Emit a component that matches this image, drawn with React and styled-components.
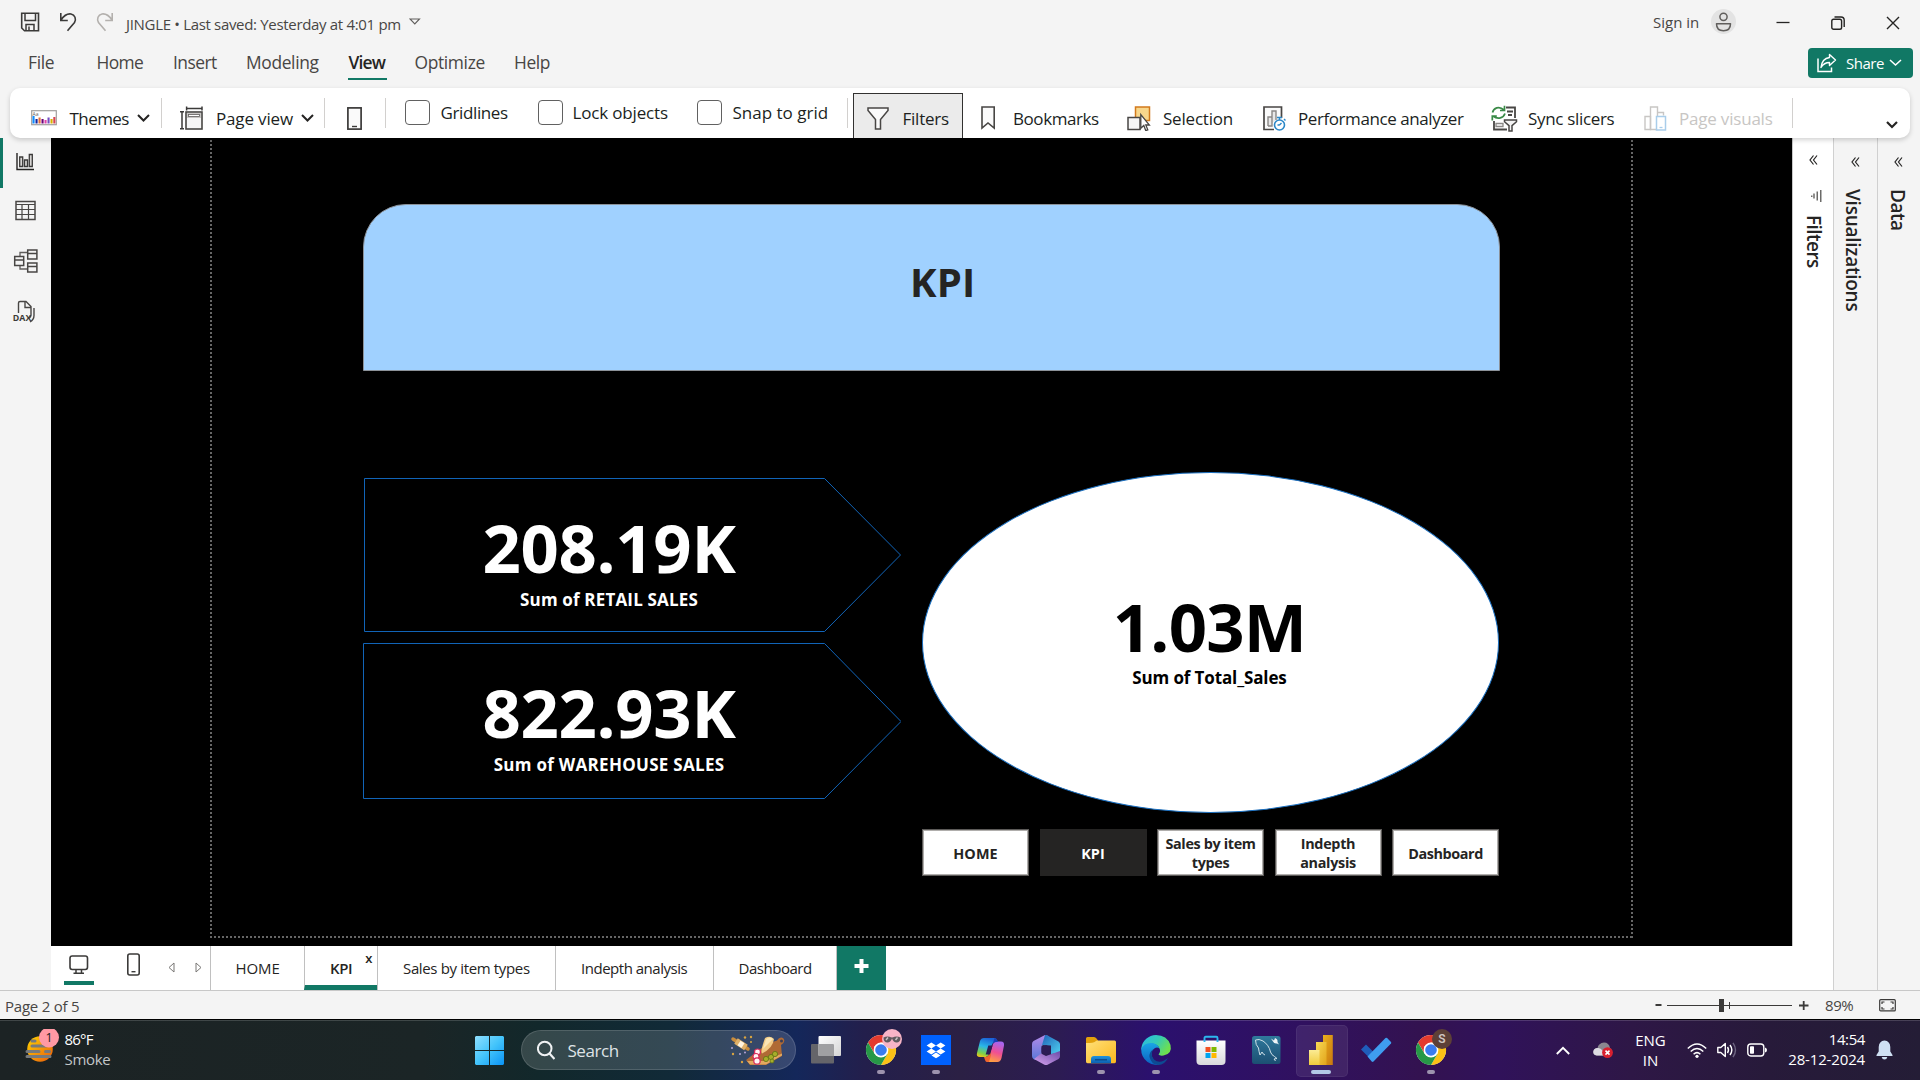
import React from "react";
import styled, { createGlobalStyle } from "styled-components";

const Global = createGlobalStyle`
  * { box-sizing: border-box; }
  body { margin: 0; background: #f4f4f4; overflow: hidden; }
  svg { display: block; flex: none; }
`;

const Screen = styled.div`
  width: 1920px;
  height: 1080px;
  display: flex;
  flex-direction: column;
  background: #f4f4f4;
  color: #252423;
  font-family: "Open Sans", "Noto Sans", "Liberation Sans", sans-serif;
  font-size: 15px;
`;

const Text = styled.span`
  flex: none;
  white-space: nowrap;
  font-size: ${(p) => p.$size || 15}px;
  font-weight: ${(p) => p.$weight || 400};
  letter-spacing: ${(p) => p.$ls || 0}px;
  line-height: ${(p) => p.$lh || 20}px;
  color: ${(p) => p.$color || "inherit"};
  width: ${(p) => (p.$w ? p.$w + "px" : "auto")};
  margin-left: ${(p) => p.$ml || 0}px;
  margin-top: ${(p) => p.$mt || 0}px;
`;

const Push = styled.div`
  flex: 1;
`;

/* ---------- window header ---------- */

const TitleRow = styled.header`
  height: 43px;
  flex: none;
  display: flex;
  align-items: center;
  padding: 0 20px;
  color: #484644;
`;

const QuickAccess = styled.div`
  display: flex;
  align-items: center;
  gap: 19px;
  margin-right: 12px;
`;

const Avatar = styled.div`
  width: 25px;
  height: 25px;
  margin: 0 40px 0 12px;
  border-radius: 50%;
  background: #e3e3e3;
  display: flex;
  align-items: center;
  justify-content: center;
`;

const WindowButtons = styled.div`
  display: flex;
  align-items: center;
  gap: 41px;
  padding-top: 2px;
`;

const TabsRow = styled.nav`
  height: 40px;
  flex: none;
  display: flex;
  align-items: center;
  padding: 0 7px 0 28px;
  color: #484644;
`;

const MenuTab = styled.div`
  position: relative;
  flex: none;
  width: ${(p) => p.$w}px;
  height: 40px;
  font-size: 17.4px;
  line-height: 39px;
  white-space: nowrap;
  letter-spacing: ${(p) => p.$ls}px;
  font-weight: ${(p) => (p.$active ? 600 : 400)};
  color: ${(p) => (p.$active ? "#252423" : "#484644")};
  &::after {
    content: "";
    display: ${(p) => (p.$active ? "block" : "none")};
    position: absolute;
    left: -1px;
    top: 35px;
    width: 39px;
    height: 2px;
    background: #117865;
  }
`;

const ShareButton = styled.button`
  width: 105px;
  height: 30px;
  padding: 0 10px 0 9px;
  border: 0;
  border-radius: 4px;
  background: #117865;
  color: #fff;
  font-family: inherit;
  text-align: left;
  display: flex;
  align-items: center;
`;

/* ---------- ribbon ---------- */

const Ribbon = styled.div`
  position: relative;
  z-index: 2;
  height: 50px;
  flex: none;
  margin: 5px 10px 0;
  display: flex;
  background: #fff;
  border-radius: 10px;
  box-shadow: 0 2px 5px rgba(0, 0, 0, 0.18);
  color: #201f1e;
`;

const RibbonItem = styled.div`
  flex: none;
  display: flex;
  align-items: center;
  width: ${(p) => p.$w}px;
  padding: ${(p) => (p.$check ? 0 : 10)}px 0 0 ${(p) => p.$pl}px;
  color: ${(p) => (p.$disabled ? "#c8c6c4" : "inherit")};
`;

const RibbonLabel = styled(Text)`
  font-size: 17px;
  padding-top: 1px;
  line-height: 21px;
`;

const PressedItem = styled(RibbonItem)`
  margin: 5px 0 0 5px;
  padding-top: 4px;
  background: #ebebeb;
  border: 1px solid #323130;
  border-bottom: 0;
`;

const Divider = styled.div`
  flex: none;
  width: 1px;
  height: 30px;
  margin-top: 10px;
  background: #d2d0ce;
`;

const CheckBox = styled.div`
  flex: none;
  width: 25px;
  height: 25px;
  margin-top: -1px;
  border: 1px solid #616161;
  border-radius: 4px;
  background: #fff;
`;

const Collapse = styled.div`
  margin: 33px 12.5px 0 auto;
`;

/* ---------- body ---------- */

const Body = styled.div`
  height: 852px;
  flex: none;
  display: flex;
`;

const Rail = styled.aside`
  width: 51px;
  flex: none;
`;

const RailItem = styled.div`
  height: ${(p) => p.$h}px;
  padding-left: ${(p) => (p.$active ? 8 : 11)}px;
  padding-bottom: 2px;
  border-left: ${(p) => (p.$active ? "3px solid #117865" : "0")};
  display: flex;
  align-items: center;
`;

const Center = styled.main`
  width: 1742px;
  flex: none;
  display: flex;
  flex-direction: column;
`;

const Canvas = styled.section`
  height: 808px;
  background: #000;
  border-right: 1px solid #c8c8c8;
  padding-left: 159px;
`;

const Dots = "#666 0 2px, transparent 2px 4px";
const Page = styled.div`
  width: 1423px;
  height: 800px;
  padding: 66px 0 0 153px;
  background:
    repeating-linear-gradient(0deg, ${Dots}) left top / 2px 100% no-repeat,
    repeating-linear-gradient(0deg, ${Dots}) right top / 2px 100% no-repeat,
    repeating-linear-gradient(90deg, ${Dots}) left bottom / 100% 2px no-repeat;
`;

const Banner = styled.div`
  width: 1136.5px;
  height: 167px;
  padding: 0 0 11px 23px;
  display: flex;
  align-items: center;
  justify-content: center;
  background: #a0d1ff;
  border: 1px solid #8c9299;
  border-radius: 43px 43px 0 0;
`;

const Board = styled.div`
  display: flex;
  margin-top: 101px;
`;

const ArrowColumn = styled.div`
  width: 559px;
  padding-top: 6px;
  display: flex;
  flex-direction: column;
  gap: 11px;
`;

const ArrowCard = styled.div`
  position: relative;
  width: 538px;
  height: ${(p) => p.$h}px;
  padding: 39px 46px 0 0;
  display: flex;
  flex-direction: column;
  align-items: center;
  color: #fff;
  & > svg {
    position: absolute;
    left: 0;
    top: 0;
  }
`;

const TotalColumn = styled.div`
  width: 577px;
`;

const Oval = styled.div`
  height: 341px;
  padding: 123px 2px 0 0;
  border-radius: 50%;
  border: 1px solid #1a6fc0;
  background: #fff;
  color: #000;
  display: flex;
  flex-direction: column;
  align-items: center;
`;

const NavRow = styled.div`
  display: flex;
  justify-content: space-between;
  margin-top: 16px;
`;

const NavButton = styled.div`
  width: 107px;
  height: 47px;
  padding-top: ${(p) => (p.$single ? 1.5 : 0)}px;
  display: flex;
  align-items: center;
  justify-content: center;
  text-align: center;
  font-size: 14.4px;
  font-weight: 700;
  line-height: 19px;
  letter-spacing: ${(p) => p.$ls || 0}px;
  background: ${(p) => (p.$active ? "#252423" : "#fff")};
  color: ${(p) => (p.$active ? "#fff" : "#252423")};
  border: 1px solid ${(p) => (p.$active ? "#252423" : "#5c5a58")};
  box-shadow: inset 0 0 0 1px ${(p) => (p.$active ? "#252423" : "#b0aeac")};
`;

/* ---------- page tabs ---------- */

const PageBar = styled.div`
  height: 44px;
  background: #fff;
  display: flex;
`;

const ViewSwitch = styled.div`
  width: 159px;
  height: 44px;
  display: flex;
  padding-left: 13px;
`;

const DesktopView = styled.div`
  width: 30px;
  height: 39px;
  padding: 9px 0 0 5px;
  border-bottom: 4px solid #117865;
  margin-right: 33px;
`;

const Stepper = styled.div`
  display: flex;
  gap: 20px;
  padding: 16px 0 0 28px;
`;

const PageTab = styled.div`
  position: relative;
  width: ${(p) => p.$w}px;
  height: 44px;
  border-left: 1px solid #c0c0c0;
  border-bottom: ${(p) => (p.$active ? "5px solid #117865" : "0")};
  padding-left: ${(p) => p.$pl}px;
  line-height: 45px;
  font-size: 15px;
  white-space: nowrap;
  font-weight: ${(p) => (p.$active ? 600 : 400)};
  letter-spacing: ${(p) => p.$ls}px;
`;

const CloseMark = styled.span`
  position: absolute;
  right: 5px;
  top: 5px;
  font-size: 13px;
  line-height: 14px;
  font-weight: 600;
`;

const AddPage = styled.div`
  width: 50px;
  height: 44px;
  background: #117865;
  border-left: 1px solid #c0c0c0;
  padding: 13px 0 0 17px;
`;

/* ---------- side panes ---------- */

const Pane = styled.aside`
  width: ${(p) => p.$w}px;
  flex: none;
  background: ${(p) => p.$bg || "#f4f4f4"};
  border-left: ${(p) => (p.$line ? "1px solid #d0d0d0" : "0")};
  padding: ${(p) => p.$pt}px 0 0 ${(p) => p.$pl}px;
  display: flex;
  flex-direction: column;
  align-items: flex-start;
`;

const VerticalTitle = styled.div`
  writing-mode: vertical-rl;
  font-size: 19px;
  font-weight: 600;
  line-height: 24px;
  letter-spacing: ${(p) => p.$ls}px;
  margin: ${(p) => p.$mt}px 0 0 ${(p) => p.$ml}px;
`;

const FilterGlyph = styled.div`
  margin: 25px 0 0 2px;
`;

/* ---------- status bar ---------- */

const StatusBar = styled.footer`
  height: 29px;
  flex: none;
  border-top: 1px solid #c8c8c8;
  display: flex;
  align-items: center;
  padding: 0 24px 0 5px;
  color: #484644;
`;

/* ---------- taskbar ---------- */

const Taskbar = styled.div`
  height: 61px;
  flex: none;
  border-top: 1px solid #000;
  box-shadow: inset 0 1px 0 rgba(255, 255, 255, 0.16);
  display: flex;
  align-items: center;
  padding-left: 25px;
  color: #fff;
  background: linear-gradient(
    90deg,
    #1c2324 0%,
    #1b2526 22%,
    #12282b 28%,
    #112a38 35%,
    #14275a 41.5%,
    #231f4c 45%,
    #2b2044 50%,
    #2c1c52 55%,
    #2b106e 60%,
    #30115f 68%,
    #331250 74%,
    #30125a 78%,
    #2e1746 85%,
    #271a3a 92%,
    #241d36 100%
  );
`;

const Weather = styled.div`
  display: flex;
  width: 450px;
  flex: none;
  padding-bottom: 2px;
`;

const Lines = styled.div`
  display: flex;
  flex-direction: column;
  flex: none;
  width: ${(p) => p.$w}px;
  align-items: ${(p) => p.$align || "flex-start"};
  padding-bottom: ${(p) => p.$pb || 0}px;
`;

const SearchPill = styled.div`
  width: 275px;
  height: 40px;
  flex: none;
  margin: 0 2.5px 0 17px;
  padding: 0 9px 0 15px;
  display: flex;
  align-items: center;
  border-radius: 20px;
  border: 1px solid rgba(255, 255, 255, 0.14);
  background: rgba(255, 255, 255, 0.15);
  color: #dfe3e6;
`;

const Slot = styled.div`
  position: relative;
  width: 55px;
  height: 60px;
  flex: none;
  display: flex;
  flex-direction: column;
  align-items: center;
  padding-top: 15px;
  &::before {
    content: "";
    display: ${(p) => (p.$focused ? "block" : "none")};
    position: absolute;
    left: 2px;
    top: 5px;
    width: 50px;
    height: 50px;
    border-radius: 5px;
    background: rgba(255, 255, 255, 0.08);
    border: 1px solid rgba(255, 255, 255, 0.06);
  }
  & > svg {
    position: relative;
    overflow: visible;
  }
`;

const Indicator = styled.div`
  position: relative;
  width: ${(p) => (p.$wide ? 20 : 8)}px;
  height: 4px;
  margin-top: 5px;
  border-radius: 2px;
  background: ${(p) => (p.$wide ? "#b3c8e6" : "#9d93ae")};
`;

const Tray = styled.div`
  display: flex;
  align-items: center;
  margin-left: 97.5px;
`;

const Gap = styled.div`
  flex: none;
  width: ${(p) => p.$w}px;
`;

/* ---------- icons ---------- */

const Svg = ({ w, h, children, vb, ...rest }) => (
  <svg width={w} height={h} viewBox={vb || `0 0 ${w} ${h}`} fill="none" {...rest}>
    {children}
  </svg>
);

const Chevron = ({ w = 13, h = 8, color = "#252423", sw = 2 }) => (
  <Svg w={w} h={h}>
    <path d={`M1 1 L${w / 2} ${h - 1.5} L${w - 1} 1`} stroke={color} strokeWidth={sw} />
  </Svg>
);

const DoubleLeft = () => (
  <Svg w={9} h={10}>
    <path d="M4.500 .5L1 5l3.500 4.500M8 .5L4.500 5 8 9.500" stroke="#252423" strokeWidth="1.200" />
  </Svg>
);

const SaveIcon = () => (
  <Svg w={20} h={20}>
    <path d="M1.700 1.200h16.800v17.600H4.500L1.700 16z" stroke="#3b3a39" strokeWidth="1.600" />
    <path d="M5 1.500v7h10.500v-7M6 18.500v-6h8v6M9 14.500v4" stroke="#3b3a39" strokeWidth="1.500" />
  </Svg>
);

const UndoIcon = ({ flip, color }) => (
  <Svg w={18} h={20}>
    <path
      transform={flip ? "translate(18 0) scale(-1 1)" : undefined}
      d="M1.800 1v7.500h7M2 8C5 3.500 8.500 1.500 12 2c4 .8 5.500 5 3.500 8.500L8.500 18.800"
      stroke={color}
      strokeWidth="1.600"
    />
  </Svg>
);

const ThemesIcon = () => (
  <Svg w={26} h={16}>
    <rect x=".7" y=".7" width="24.600" height="14" stroke="#a19f9d" strokeWidth="1.200" fill="#fff" />
    <text x="1.500" y="5.500" fontSize="5" fontFamily="Open Sans, sans-serif" fill="#605e5c">Aa</text>
    {[["#118dff", 6, 1.5], ["#12239e", 9, 4.5], ["#e66c37", 7.5, 7.5], ["#6b007b", 9, 10.5], ["#e044a7", 10, 13.5], ["#744ec2", 7.5, 16.5], ["#d9b300", 9, 19.5], ["#d64550", 7, 22.3]].map(([c, y, x]) => (
      <rect key={c} x={x} y={y} width="2.100" height={13.5 - y} fill={c} />
    ))}
  </Svg>
);

const PageViewIcon = () => (
  <Svg w={23} h={24}>
    <path d="M6 2.500h16.500M6.600 .5v4M22 .5v4M2 6v17M0 5.800h4M0 22.800h4" stroke="#3b3a39" strokeWidth="1.500" />
    <rect x="6" y="6" width="16" height="17" fill="#f6f6f6" stroke="#484644" strokeWidth="1.600" />
    <rect x="7" y="7" width="14" height="5" fill="#c8c6c4" />
    <rect x="8.500" y="8.500" width="11" height="2" fill="#fff" stroke="#605e5c" strokeWidth=".8" />
  </Svg>
);

const MobileRibbonIcon = () => (
  <Svg w={15} h={23}>
    <rect x=".9" y=".9" width="13.200" height="21.200" fill="#fafafa" stroke="#3b3a39" strokeWidth="1.700" />
    <path d="M5 19.500h5" stroke="#3b3a39" strokeWidth="1.400" />
  </Svg>
);

const FunnelIcon = () => (
  <Svg w={22} h={23}>
    <path d="M1 1h20v2.500L13.500 12.500V22H8.500V12.500L1 3.500z" fill="#fafafa" stroke="#484644" strokeWidth="1.500" />
  </Svg>
);

const BookmarkIcon = () => (
  <Svg w={14} h={24}>
    <path d="M1 1h12.200v21L7 17 1 22z" fill="#fafafa" stroke="#484644" strokeWidth="1.600" />
  </Svg>
);

const SelectionIcon = () => (
  <Svg w={24} h={25}>
    <rect x="8.500" y="1" width="14" height="13.500" fill="#f8d78c" stroke="#d27a1c" strokeWidth="1.500" />
    <rect x="1" y="11.500" width="12" height="12" fill="#f6f6f6" stroke="#484644" strokeWidth="1.500" />
    <path d="M13.800 8.500v13.800l3-2.800 2 5.200 2-.9-2-4.800h3.600z" fill="#fff" stroke="#484644" strokeWidth="1.300" />
  </Svg>
);

const PerformanceIcon = () => (
  <Svg w={23} h={25}>
    <path d="M11 23.500H1V1h17.500v11" stroke="#484644" strokeWidth="1.700" fill="#fafafa" />
    <path d="M5 20V11h4V5h4v9M9 11v9H5" stroke="#8a8886" strokeWidth="1.400" fill="#e8e8e8" />
    <circle cx="16.500" cy="19" r="5" fill="#fff" stroke="#2b88c8" strokeWidth="1.600" />
    <path d="M14 11.500h5M16.500 11.500V14M16.500 19l2-2M21 13l1.500 1.500M14.500 19h2" stroke="#2b88c8" strokeWidth="1.400" />
  </Svg>
);

const SyncIcon = () => (
  <Svg w={27} h={27}>
    <path d="M15 2.500h9V13M16 6.500h6M17 10h4M3 16v8.500h13" stroke="#484644" strokeWidth="1.800" />
    <path d="M5 18.500h7v3H5z" stroke="#8a8886" strokeWidth="1.300" />
    <path d="M1.500 7.500C2.500 3 8 .5 13 5M13.500 .8V5.500H9M14 8.500c-1.500 4.500-7 6.500-12 2.500M1.300 15.500V11h4.500" stroke="#3a8a47" strokeWidth="1.700" />
    <path d="M13.500 15h12v1.700l-4.500 4V26h-3v-5.300l-4.500-4z" fill="#f4f4f4" stroke="#484644" strokeWidth="1.500" />
  </Svg>
);

const PageVisualsIcon = () => (
  <Svg w={23} h={25}>
    <path d="M6.500 23.500V1h7v22.500z M13.500 6.500h6v3" stroke="#c8c6c4" strokeWidth="1.400" />
    <path d="M1 10.500h5.500v13H1z" stroke="#c8c6c4" strokeWidth="1.400" />
    <rect x="12.500" y="10.500" width="9" height="13.500" fill="#fff" stroke="#a9cdea" strokeWidth="1.500" />
    <path d="M15.500 21.500h3" stroke="#a9cdea" strokeWidth="1.300" />
  </Svg>
);

const ReportIcon = () => (
  <Svg w={28} h={24}>
    <path d="M6 3v16.500h17" stroke="#252423" strokeWidth="1.400" />
    <path d="M8.700 7h3v9.500h-3zM13.500 10h3v6.500h-3zM18.300 4.500h3v12h-3z" fill="#d8d6d4" stroke="#3b3a39" strokeWidth="1.300" />
  </Svg>
);

const TableIcon = () => (
  <Svg w={28} h={24}>
    <rect x="5" y="2.500" width="19" height="18" stroke="#484644" strokeWidth="1.500" />
    <path d="M5 5.500h19M5 10.500h19M5 15.500h19M11 5.500v15M17.500 5.500v15" stroke="#484644" strokeWidth="1.200" />
  </Svg>
);

const ModelIcon = () => (
  <Svg w={28} h={26}>
    <path d="M9 10V4.500h8M9 14v7h8" stroke="#605e5c" strokeWidth="1.300" />
    <path d="M3.700 8.500h9v9h-9zM3.700 12h9M16.700 2h9.200v9h-9.200zM16.700 5.500h9.200M16.700 15h9.200v9h-9.200zM16.700 18.500h9.200" fill="#f4f4f4" stroke="#484644" strokeWidth="1.500" />
  </Svg>
);

const DaxIcon = () => (
  <Svg w={28} h={26}>
    <path d="M7.500 14V4q0-1.500 1.500-1.500h6l5 5V16q0 2-2 3.500M14 3v5.500h5.500M23 9v7.500q0 4-4 6.500" stroke="#484644" strokeWidth="1.400" />
    <text x="1.800" y="22" fontSize="8.800" fontWeight="700" fontFamily="Open Sans, sans-serif" fill="#3b3a39">DAX</text>
  </Svg>
);

const Flag = () => (
  <Svg w={29} h={29}>
    <defs>
      <linearGradient id="win" x1="0" y1="0" x2="1" y2="1">
        <stop offset="0" stopColor="#8fe0ff" />
        <stop offset=".5" stopColor="#43c4fb" />
        <stop offset="1" stopColor="#0a93f5" />
      </linearGradient>
    </defs>
    <path d="M1 0h13v14H0V1zM15 0h13l1 1v13H15zM0 15h14v14H1l-1-1zM15 15h14v13l-1 1H15z" fill="url(#win)" />
  </Svg>
);

const WeatherIcon = () => (
  <Svg w={40} h={40}>
    <defs>
      <linearGradient id="sun" x1="0" y1="0" x2="1" y2="1">
        <stop offset="0" stopColor="#ffd400" />
        <stop offset="1" stopColor="#e85a0c" />
      </linearGradient>
    </defs>
    <circle cx="15" cy="20" r="12.800" fill="url(#sun)" />
    <path d="M7 12h3M7 17h14M2 22.500h12M20.500 22.500h4M2 27.500h23" stroke="#777a7c" strokeWidth="3" strokeLinecap="round" />
    <circle cx="24" cy="8.500" r="10" fill="#ff99a4" />
    <text x="24" y="13" textAnchor="middle" fontSize="12.500" fontFamily="Open Sans, sans-serif" fill="#1b1b1b">1</text>
  </Svg>
);

const FoodIcon = () => (
  <Svg w={56} h={30}>
    <path d="M16 25L37 9l10-3.500Q50 1 53.500 3.500 56 7 51 10l1 11-16 9H20z" fill="#b06a34" />
    <path d="M17 26l3 3.500h16l16-9v-2L35 26z" fill="#e2a860" />
    <circle cx="51.500" cy="6" r="1.500" fill="#3a3f58" />
    <path d="M35 3q5-3 9 1-1 9-12 14.500Q30 17 35 3z" fill="#f2cb85" />
    <path d="M36 4q4-3 7 0L33 14z" fill="#fbe6b5" />
    <g fill="#fff3f3" stroke="#d82a5a" strokeWidth="1.200">
      <circle cx="27.500" cy="17" r="3" /><circle cx="26" cy="21.500" r="3" /><circle cx="27" cy="26" r="3.200" />
    </g>
    <g fill="#a7ad2a" stroke="#5f7414" strokeWidth=".8">
      <circle cx="36" cy="24" r="2.600" /><circle cx="41" cy="22" r="2.600" /><circle cx="45" cy="19" r="2.600" /><circle cx="42" cy="26" r="2" />
    </g>
    <path d="M3 4l15 10" stroke="#c98d3e" strokeWidth="3.500" strokeLinecap="round" />
    <path d="M6 6l10 6.500" stroke="#dfb069" strokeWidth="6.500" />
    <path d="M9 8l4 2.600" stroke="#fff3df" strokeWidth="5.500" />
    <g fill="#d9a441"><circle cx="15" cy="2.500" r="1.200" /><circle cx="21" cy="2" r="1.200" /><circle cx="3" cy="19" r="1.200" /><circle cx="12" cy="27" r="1.200" /><circle cx="21" cy="7" r="1" /></g>
    <g fill="#b6a4d6"><circle cx="2" cy="13" r="1" /><circle cx="10" cy="19" r="1" /><circle cx="15" cy="17.500" r="1" /></g>
  </Svg>
);

const TaskViewIcon = () => (
  <Svg w={30} h={30}>
    <defs>
      <linearGradient id="tv" x1="0" y1="0" x2="1" y2="1"><stop offset="0" stopColor="#fff" /><stop offset="1" stopColor="#d5d5d5" /></linearGradient>
    </defs>
    <rect x="0" y="9" width="23" height="19.500" rx="1" fill="#65656a" />
    <rect x="7.500" y="1" width="22.500" height="20" rx="1" fill="url(#tv)" />
    <path d="M7.500 9h14.500q1 0 1 1v11h-14.500q-1 0-1-1z" fill="#a0a0a2" />
  </Svg>
);

const ChromeIcon = ({ badge }) => (
  <Svg w={30} h={30}>
    <circle cx="15" cy="15" r="15" fill="#fff" />
    <path d="M15 7.500H28A15 15 0 0 1 15 30l6.500-11.300z" fill="#fbc116" />
    <path d="M2 7.500A15 15 0 0 1 28 7.500H15L8.500 11.200 8 17.500z" fill="#e33b2e" />
    <path d="M2 7.500L8.600 18.700 15 22l6.500-3.300L15 30A15 15 0 0 1 2 7.500z" fill="#279847" />
    <circle cx="15" cy="15" r="7.400" fill="#fff" />
    <circle cx="15" cy="15" r="5.800" fill="#3a7cf0" />
    {badge === "face" ? (
      <g>
        <circle cx="26" cy="4" r="10" fill="#f7b4c6" />
        <path d="M17.500 2.500q4-2 8 0 .5-.5 1 0 4-2 8 0 0 5-4 5-3 0-4.500-4-1.500 4-4.500 4-4 0-4-5z" fill="#5f5a5e" />
        <path d="M20 5l2-2.500M29.500 5l2-2.500" stroke="#c9c3c5" strokeWidth="1.400" />
      </g>
    ) : (
      <g>
        <circle cx="26" cy="4" r="10" fill="#5d4037" />
        <text x="26" y="8.400" textAnchor="middle" fontSize="12" fontWeight="600" fontFamily="Roboto, sans-serif" fill="#cfc5c1">S</text>
      </g>
    )}
  </Svg>
);

const DropboxIcon = () => (
  <Svg w={30} h={30}>
    <path d="M0 0h30v30H0z" fill="#0061fe" />
    <path d="M10.300 7.500l4.700 3-4.700 3-4.700-3zM19.700 7.500l4.700 3-4.700 3-4.700-3zM10.300 13.500l4.700 3-4.700 3-4.700-3zM19.700 13.500l4.700 3-4.700 3-4.700-3zM15 17.600l4.500 2.900-4.500 2.700-4.500-2.700z" fill="#fff" />
  </Svg>
);

const CopilotIcon = () => (
  <Svg w={30} h={30}>
    <defs>
      <linearGradient id="cpA" x1=".5" y1="0" x2=".2" y2="1"><stop offset="0" stopColor="#1b63d8" /><stop offset=".45" stopColor="#2ab6e8" /><stop offset=".8" stopColor="#7bd04a" /><stop offset="1" stopColor="#f0c419" /></linearGradient>
      <linearGradient id="cpB" x1=".6" y1="0" x2=".3" y2="1"><stop offset="0" stopColor="#a665f0" /><stop offset=".5" stopColor="#f04f93" /><stop offset="1" stopColor="#ffa43c" /></linearGradient>
    </defs>
    <path d="M14 19l3-10q1-2.500 3.500-2.500H25q3.500 0 3 4L25.500 23q-1 4-4 4H10q3 0 4-8z" fill="url(#cpB)" />
    <path d="M8 3h10.500q2 0 2.800 2.500l.5 1.500h-2q-3 0-4 3l-3 9q-1 3-3 3H4q-4 0-3-4L4 6q1-3 4-3z" fill="url(#cpA)" />
    <path d="M18.500 3q2 0 2.800 2.500l.5 1.500h-2q-2 0-3 1.500z" fill="#1a3fb8" />
    <path d="M8 22h2q2 0 3-3l1-3 1 4-2 7h-2q-1.500 0-2-2z" fill="#f0652f" />
    <path d="M12.300 10.500h4.200l-2.500 9h-4.300z" fill="#2a1c55" />
  </Svg>
);

const M365Icon = () => (
  <Svg w={30} h={30}>
    <defs>
      <linearGradient id="mA" x1="0" y1="0" x2="0" y2="1"><stop offset="0" stopColor="#b48be8" /><stop offset="1" stopColor="#5a78d8" /></linearGradient>
      <linearGradient id="mB" x1="0" y1="0" x2="1" y2="1"><stop offset="0" stopColor="#1f62b8" /><stop offset="1" stopColor="#4fd0f0" /></linearGradient>
      <linearGradient id="mC" x1="0" y1="1" x2="1" y2="0"><stop offset="0" stopColor="#d9a5f0" /><stop offset="1" stopColor="#6a4aa8" /></linearGradient>
    </defs>
    <path d="M14 0L2.500 6Q1 7 1 9v12q0 2 1.500 3l2 1 6-3V11l7-4V1z" fill="url(#mA)" />
    <path d="M14 0q1-.3 2 .3L27.500 6.500Q29 7.500 29 9v9l-9 1V10.500L11 10z" fill="url(#mB)" />
    <path d="M29 16v5q0 2-1.500 3L17 29.500q-2 1-4 0L3 24l7-5.500 5 2.500z" fill="url(#mC)" />
    <path d="M10.500 12.500L15 10l4.500 2.500v5L15 20l-4.500-2.500z" fill="#2d1c56" />
  </Svg>
);

const ExplorerIcon = () => (
  <Svg w={30} h={30}>
    <defs>
      <linearGradient id="fo" x1="0" y1="0" x2="1" y2="1"><stop offset="0" stopColor="#ffe07a" /><stop offset="1" stopColor="#fbb81c" /></linearGradient>
      <linearGradient id="fb" x1="0" y1="0" x2="0" y2="1"><stop offset="0" stopColor="#1f93dc" /><stop offset="1" stopColor="#0c60b0" /></linearGradient>
    </defs>
    <path d="M0 3.500Q0 2 1.500 2H8q1.500 0 2.500 1.500L12 5.500V12H0z" fill="#e2a00c" />
    <path d="M0 8q8 0 9-1.300 1-1.200 3-1.200h16.500Q30 5.500 30 7v19.500q0 1.700-1.500 1.700h-27Q0 28.200 0 26.500z" fill="url(#fo)" />
    <path d="M5 28.200V24q0-3 3-3h14q3 0 3 3v4.200z" fill="url(#fb)" />
    <path d="M9 24.800h12" stroke="#0a4a8c" strokeWidth="1.400" />
  </Svg>
);

const EdgeIcon = () => (
  <Svg w={30} h={30}>
    <defs>
      <linearGradient id="eA" x1="0" y1="0" x2="1" y2=".5"><stop offset="0" stopColor="#2ab8ea" /><stop offset=".55" stopColor="#35cbb5" /><stop offset="1" stopColor="#6ee04e" /></linearGradient>
      <linearGradient id="eB" x1="0" y1="0" x2="0" y2="1"><stop offset="0" stopColor="#1aa5e6" /><stop offset="1" stopColor="#0b5fc0" /></linearGradient>
    </defs>
    <path d="M.3 13A15 15 0 0 1 15 0q11 0 14.500 10 2 9-7 10.500-4 .5-5-1 2.500-3 1-6Q16 8 9 9 3 10 .3 15z" fill="url(#eA)" />
    <path d="M.2 14Q3 8 9.500 8q7 0 9 5.500-2-1.500-4.500-.5-5 3-3 9 2.500 6 7 7.700-6 1.200-11.500-2.700Q0 22 .2 14z" fill="url(#eB)" />
    <path d="M12 14.500Q9 20 13 24.500q6 5 14-1.500-4 7.500-10 7-7-1-8.500-8Q8 17 12 14.500z" fill="#0d4a92" />
  </Svg>
);

const StoreIcon = () => (
  <Svg w={30} h={30}>
    <defs>
      <linearGradient id="st" x1="0" y1="0" x2="0" y2="1"><stop offset="0" stopColor="#fff" /><stop offset="1" stopColor="#d9d9dc" /></linearGradient>
    </defs>
    <path d="M.5 5.500h29V26q0 4-4 4h-21q-4 0-4-4z" fill="url(#st)" />
    <path d="M8.500 7V3q0-1.200 1.200-1.200h10.600q1.200 0 1.200 1.200v4" stroke="#2cb6ee" strokeWidth="1.900" />
    <path d="M9.500 12h5v5h-5z" fill="#f25022" /><path d="M15.500 12h5v5h-5z" fill="#7fba00" />
    <path d="M9.500 18h5v5h-5z" fill="#00a4ef" /><path d="M15.500 18h5v5h-5z" fill="#ffb900" />
  </Svg>
);

const MySqlIcon = () => (
  <Svg w={30} h={30}>
    <defs>
      <linearGradient id="my" x1="0" y1="0" x2="0" y2="1"><stop offset="0" stopColor="#2f7a9c" /><stop offset="1" stopColor="#1c4f72" /></linearGradient>
    </defs>
    <rect x="1" y="1" width="28.500" height="28" rx="2.500" fill="url(#my)" />
    <path d="M4.500 5Q8 3.500 12 6q6 4 7.500 11 1 3 4 4.500l2.500 2-3 .5 1.500 2M4.500 5q0 5 3 8 .5 4 1.500 7l2-3q1 2.500 3 3" stroke="#cfe0e8" strokeWidth="1" />
    <path d="M20 3.500l3 2 1-2.500q3 1 2.500 4l1.500 2.500-2-1q-3 .5-4-2z" fill="#eef4f7" />
  </Svg>
);

const PowerBiIcon = () => (
  <Svg w={30} h={30}>
    <defs>
      <linearGradient id="pA" x1="0" y1="0" x2="1" y2="1"><stop offset="0" stopColor="#eab01c" /><stop offset="1" stopColor="#c8780f" /></linearGradient>
      <linearGradient id="pB" x1="0" y1="0" x2="1" y2="1"><stop offset="0" stopColor="#f8d955" /><stop offset="1" stopColor="#e2a41a" /></linearGradient>
      <linearGradient id="pC" x1="0" y1="0" x2="0" y2="1"><stop offset="0" stopColor="#fbeb94" /><stop offset="1" stopColor="#f0cb3c" /></linearGradient>
    </defs>
    <path d="M17 0h9.800v30H17z" fill="url(#pA)" />
    <path d="M10 7h10.500v23H10z" fill="url(#pB)" />
    <path d="M3 15h10.500v15H3z" fill="url(#pC)" />
  </Svg>
);

const TodoIcon = () => (
  <Svg w={30} h={30}>
    <path d="M0 14.500L5 9.500l8.500 8.500-2 8z" fill="#1f5dbb" />
    <path d="M6.500 21.500L24.500 3q.8-.6 1.600 0L30 7q.5.800 0 1.500L12.500 26.500q-1 .8-1.800 0z" fill="#3f9df0" />
  </Svg>
);

const CloudIcon = () => (
  <Svg w={20} h={16}>
    <path d="M4 13.500Q0 13 .3 9.500.8 6 4.500 6q1-5 6.500-5.500Q16 .5 17 6q2.500 2 1.500 5l-3 2.500z" fill="#8a8790" />
    <path d="M3.500 13.500Q0 13 .3 9.500 1 6 4.500 6q3-.5 5 2.500l2 5z" fill="#dddbe2" />
    <circle cx="14.500" cy="10.600" r="5.400" fill="#d8202f" />
    <path d="M12.500 8.600l4 4m0-4l-4 4" stroke="#fff" strokeWidth="1.500" />
  </Svg>
);

const WifiIcon = () => (
  <Svg w={20} h={16}>
    <path d="M.8 6.500q9.200-9 18.400 0M3.700 9.500q6.300-6 12.600 0M6.600 12.300q3.400-3.300 6.800 0" stroke="#fff" strokeWidth="1.500" />
    <circle cx="10" cy="14.300" r="1.600" fill="#fff" />
  </Svg>
);

const VolumeIcon = () => (
  <Svg w={20} h={16}>
    <path d="M.8 5.500h3L8.300 1.500v13L3.800 10.500h-3z" stroke="#fff" strokeWidth="1.400" strokeLinejoin="round" />
    <path d="M10.500 5q2 3 0 6M13 3q3.700 5 0 10" stroke="#fff" strokeWidth="1.400" />
    <path d="M16 .8q5 7.200 0 14.400" stroke="#6d6480" strokeWidth="1.400" />
  </Svg>
);

const BatteryIcon = () => (
  <Svg w={20} h={14}>
    <rect x=".8" y="1" width="16" height="12" rx="3" stroke="#fff" strokeWidth="1.400" />
    <rect x="3" y="3.200" width="4" height="7.600" rx=".8" fill="#fff" />
    <path d="M18 4.500q2 .5 2 2.500t-2 2.500z" fill="#fff" />
  </Svg>
);

const BellIcon = () => (
  <Svg w={17} h={20}>
    <path d="M8.500 .5Q14 1 14.300 7v4.500L16.500 15v1H.5v-1l2.200-3.500V7Q3 1 8.500 .5z" fill="#cfe0f3" />
    <path d="M5.700 17h5.600q-.5 2.500-2.800 2.500T5.700 17z" fill="#cfe0f3" />
  </Svg>
);

/* ---------- data ---------- */

const menuTabs = [
  ["File", 68.5, -0.35], ["Home", 76.5, -0.6], ["Insert", 73, -0.55], ["Modeling", 102.5, -0.35],
  ["View", 66, -0.85, true], ["Optimize", 99.5, -0.35], ["Help", 60, -0.4],
];

const pageTabs = [
  ["HOME", 94, 24.5, -0.1], ["KPI", 73, 25, -0.4, true], ["Sales by item types", 178, 25, -0.35],
  ["Indepth analysis", 158, 25, -0.48], ["Dashboard", 123, 24.5, -0.47],
];

const navButtons = [
  { name: "HOME", ls: 0.1, single: true },
  { name: "KPI", ls: 0, single: true, active: true },
  { name: "Sales by item types", ls: -0.35 },
  { name: "Indepth analysis", ls: -0.3 },
  { name: "Dashboard", ls: -0.4, single: true },
];

const arrows = [
  { h: 154, value: "208.19K", label: "Sum of RETAIL SALES", ls: 0.17, points: "1.500,.5 461.500,.5 537.500,77 461.500,153.500 1.500,153.500" },
  { h: 156, value: "822.93K", label: "Sum of WAREHOUSE SALES", ls: 0.29, points: ".5,.5 461.500,.5 538,78.500 461.500,155.500 .5,155.500" },
];

const apps = [
  [TaskViewIcon], [ChromeIcon, "dot", "face"], [DropboxIcon, "dot"], [CopilotIcon], [M365Icon], [ExplorerIcon, "dot"],
  [EdgeIcon, "dot"], [StoreIcon], [MySqlIcon], [PowerBiIcon, "wide"], [TodoIcon], [ChromeIcon, "dot", "letter"],
];

export default function App() {
  return (
    <Screen>
      <Global />
      <TitleRow>
        <QuickAccess>
          <SaveIcon />
          <UndoIcon color="#3b3a39" />
          <UndoIcon color="#b3b0ad" flip />
        </QuickAccess>
        <Text $ls={-0.32} $ml={0} $mt={5} $w={283}>JINGLE • Last saved: Yesterday at 4:01 pm</Text>
        <Svg w={12} h={8}><path d="M1 1h9.500L5.800 6z" stroke="#605e5c" strokeWidth="1.100" /></Svg>
        <Push />
        <Text $w={46}>Sign in</Text>
        <Avatar>
          <Svg w={17} h={20}>
            <circle cx="8.500" cy="4.800" r="3.600" stroke="#605e5c" strokeWidth="1.500" />
            <path d="M1.500 11.800h14q0 7-7 7t-7-7z" stroke="#605e5c" strokeWidth="1.500" strokeLinejoin="round" />
          </Svg>
        </Avatar>
        <WindowButtons>
          <Svg w={14} h={14}><path d="M.5 6.500h13" stroke="#252423" strokeWidth="1.300" /></Svg>
          <Svg w={14} h={14}>
            <rect x=".8" y="3.200" width="9.800" height="10" rx="1.800" stroke="#252423" strokeWidth="1.400" />
            <path d="M3.500 1h6.500q3.200 0 3.200 3.200V11" stroke="#252423" strokeWidth="1.400" />
          </Svg>
          <Svg w={14} h={14}><path d="M1 1l12 12M13 1L1 13" stroke="#252423" strokeWidth="1.400" /></Svg>
        </WindowButtons>
      </TitleRow>

      <TabsRow>
        {menuTabs.map(([name, w, ls, active]) => (
          <MenuTab key={name} $w={w} $ls={ls} $active={active}>{name}</MenuTab>
        ))}
        <Push />
        <ShareButton>
          <Svg w={20} h={20}>
            <path d="M1 5.500V18.500H14.500V14.500" stroke="#fff" strokeWidth="1.500" />
            <path d="M12.500 1.500l6 5.500-6 5.500V9.500Q7 9.500 4 14.500 5 5.500 12.500 4.500z" stroke="#fff" strokeWidth="1.400" strokeLinejoin="round" />
          </Svg>
          <Text $ml={9} $w={43} $ls={-0.5}>Share</Text>
          <Chevron w={13} h={7.5} color="#fff" sw={1.6} />
        </ShareButton>
      </TabsRow>

      <Ribbon>
        <RibbonItem $w={151} $pl={21}>
          <ThemesIcon /><RibbonLabel $ls={-0.55} $ml={12.5} $w={67.5}>Themes</RibbonLabel><Chevron />
        </RibbonItem>
        <Divider />
        <RibbonItem $w={162} $pl={18}>
          <PageViewIcon /><RibbonLabel $ls={-0.15} $ml={13} $w={85}>Page view</RibbonLabel><Chevron />
        </RibbonItem>
        <Divider />
        <RibbonItem $w={60} $pl={22}><MobileRibbonIcon /></RibbonItem>
        <Divider />
        <RibbonItem $w={133} $pl={19} $check><CheckBox /><Text $size={17} $ls={-0.38} $ml={10.5} $mt={-1}>Gridlines</Text></RibbonItem>
        <RibbonItem $w={159} $pl={19} $check><CheckBox /><Text $size={17} $ls={-0.17} $ml={9.5} $mt={-1}>Lock objects</Text></RibbonItem>
        <RibbonItem $w={169} $pl={19} $check><CheckBox /><Text $size={17} $ml={10.5} $mt={-1}>Snap to grid</Text></RibbonItem>
        <Divider />
        <PressedItem $w={110} $pl={13}><FunnelIcon /><RibbonLabel $ls={-0.24} $ml={13.5}>Filters</RibbonLabel></PressedItem>
        <RibbonItem $w={150} $pl={18}><BookmarkIcon /><RibbonLabel $ls={-0.43} $ml={18}>Bookmarks</RibbonLabel></RibbonItem>
        <RibbonItem $w={134} $pl={14}><SelectionIcon /><RibbonLabel $ls={-0.2} $ml={12}>Selection</RibbonLabel></RibbonItem>
        <RibbonItem $w={230} $pl={16}><PerformanceIcon /><RibbonLabel $ls={-0.42} $ml={12}>Performance analyzer</RibbonLabel></RibbonItem>
        <RibbonItem $w={153} $pl={13.5}><SyncIcon /><RibbonLabel $ls={-0.32} $ml={10.5}>Sync slicers</RibbonLabel></RibbonItem>
        <RibbonItem $w={162} $pl={14} $disabled><PageVisualsIcon /><RibbonLabel $ls={-0.2} $ml={12}>Page visuals</RibbonLabel></RibbonItem>
        <Divider />
        <Collapse><Chevron w={12} h={7.5} sw={2.2} /></Collapse>
      </Ribbon>

      <Body>
        <Rail>
          <RailItem $h={50} $active><ReportIcon /></RailItem>
          <RailItem $h={48}><TableIcon /></RailItem>
          <RailItem $h={51}><ModelIcon /></RailItem>
          <RailItem $h={51}><DaxIcon /></RailItem>
        </Rail>

        <Center>
          <Canvas>
            <Page>
              <Banner><Text $size={40} $weight={700} $ls={0.2} $lh={50}>KPI</Text></Banner>
              <Board>
                <ArrowColumn>
                  {arrows.map((a) => (
                    <ArrowCard key={a.value} $h={a.h}>
                      <Svg w={538} h={a.h}><polygon points={a.points} stroke="#1164b8" strokeWidth="1" /></Svg>
                      <Text $size={67} $weight={700} $ls={-0.28} $lh={60}>{a.value}</Text>
                      <Text $size={17} $weight={700} $ls={a.ls} $lh={24} $mt={11}>{a.label}</Text>
                    </ArrowCard>
                  ))}
                </ArrowColumn>
                <TotalColumn>
                  <Oval>
                    <Text $size={67} $weight={700} $ls={-0.7} $lh={60}>1.03M</Text>
                    <Text $size={17} $weight={700} $ls={-0.13} $lh={24} $mt={10}>Sum of Total_Sales</Text>
                  </Oval>
                  <NavRow>
                    {navButtons.map((b) => (
                      <NavButton key={b.name} $ls={b.ls} $active={b.active} $single={b.single}>{b.name}</NavButton>
                    ))}
                  </NavRow>
                </TotalColumn>
              </Board>
            </Page>
          </Canvas>

          <PageBar>
            <ViewSwitch>
              <DesktopView>
                <Svg w={20} h={20}>
                  <rect x="1" y="1" width="17.500" height="13.500" rx="2.200" stroke="#3b3a39" strokeWidth="1.600" />
                  <path d="M7 15v3M12.500 15v3M4.500 18.300h10.500" stroke="#3b3a39" strokeWidth="1.500" />
                </Svg>
              </DesktopView>
              <Svg w={13} h={32}>
                <rect x=".8" y="8" width="11.400" height="21" rx="2" stroke="#3b3a39" strokeWidth="1.600" />
                <path d="M4.500 25.700h4" stroke="#3b3a39" strokeWidth="1.400" />
              </Svg>
              <Stepper>
                <Svg w={7} h={11}><path d="M6 1v9L1 5.500z" stroke="#797775" /></Svg>
                <Svg w={7} h={11}><path d="M1 1v9l5-4.500z" stroke="#797775" /></Svg>
              </Stepper>
            </ViewSwitch>
            {pageTabs.map(([name, w, pl, ls, active]) => (
              <PageTab key={name} $w={w} $pl={pl} $ls={ls} $active={active}>
                {name}
                {active && <CloseMark>x</CloseMark>}
              </PageTab>
            ))}
            <AddPage><Svg w={15} h={14}><path d="M7.500 0v14M.5 7h14" stroke="#fff" strokeWidth="4" /></Svg></AddPage>
          </PageBar>
        </Center>

        <Pane $w={40} $bg="#fff" $pt={17} $pl={16}>
          <DoubleLeft />
          <FilterGlyph><Svg w={11} h={12}><path d="M9.800 0v12M6.200 1.500v9M3 3.500v5M.8 5.500v1.500" stroke="#484644" strokeWidth="1.200" /></Svg></FilterGlyph>
          <VerticalTitle $mt={13} $ml={-7} $ls={-0.55}>Filters</VerticalTitle>
        </Pane>
        <Pane $w={44} $line $pt={19} $pl={17}>
          <DoubleLeft />
          <VerticalTitle $mt={22} $ml={-10} $ls={-0.25}>Visualizations</VerticalTitle>
        </Pane>
        <Pane $w={43} $line $pt={19} $pl={16}>
          <DoubleLeft />
          <VerticalTitle $mt={22} $ml={-8.5} $ls={-0.5}>Data</VerticalTitle>
        </Pane>
      </Body>

      <StatusBar>
        <Text $ls={-0.23} $mt={1.5}>Page 2 of 5</Text>
        <Push />
        <Svg w={154} h={16}>
          <path d="M.5 8h6M144 8.500h9.500M148.700 4v9" stroke="#3b3a39" strokeWidth="1.800" />
          <path d="M12 8.500h125" stroke="#3b3a39" />
          <path d="M66.500 2v13" stroke="#3b3a39" strokeWidth="5" />
          <path d="M74.500 5v7" stroke="#3b3a39" />
        </Svg>
        <Text $ml={16} $w={54} $ls={-0.4}>89%</Text>
        <Svg w={17} h={13}>
          <rect x=".7" y=".7" width="15.600" height="11.200" rx="1" stroke="#3b3a39" strokeWidth="1.200" />
          <path d="M3 5V3h2.500M11.500 3H14v2M14 8v2h-2.500M5.500 10H3V8" stroke="#3b3a39" strokeWidth="1.200" />
        </Svg>
      </StatusBar>

      <Taskbar>
        <Weather>
          <WeatherIcon />
          <Lines $w={60}>
            <Text $ls={-0.8} $ml={-0.5}>86°F</Text>
            <Text $ls={-0.3} $ml={-0.5} $color="#c3c6c8">Smoke</Text>
          </Lines>
        </Weather>
        <Flag />
        <SearchPill>
          <Svg w={18} h={20}>
            <circle cx="7.700" cy="8.500" r="6.800" stroke="#f0f2f4" strokeWidth="2" />
            <path d="M12.500 13.500l5 5.500" stroke="#f0f2f4" strokeWidth="2.200" />
          </Svg>
          <Text $size={17} $ls={-0.45} $ml={12.5} $mt={2}>Search</Text>
          <Push />
          <FoodIcon />
        </SearchPill>
        {apps.map(([Icon, mark, badge], i) => (
          <Slot key={i} $focused={mark === "wide"}>
            <Icon badge={badge} />
            {mark && <Indicator $wide={mark === "wide"} />}
          </Slot>
        ))}
        <Tray>
          <Svg w={14} h={9}><path d="M.8 8L7 1.800 13.200 8" stroke="#fff" strokeWidth="1.900" /></Svg>
          <Gap $w={22.5} /><CloudIcon />
          <Gap $w={22} />
          <Lines $w={32} $align="center"><Text>ENG</Text><Text>IN</Text></Lines>
          <Gap $w={20.5} /><WifiIcon />
          <Gap $w={10} /><VolumeIcon />
          <Gap $w={10} /><BatteryIcon />
          <Gap $w={18} />
          <Lines $w={80} $align="flex-end" $pb={2}><Text $ls={-0.4}>14:54</Text><Text $ls={-0.15}>28-12-2024</Text></Lines>
          <Gap $w={11} /><BellIcon />
        </Tray>
      </Taskbar>
    </Screen>
  );
}
